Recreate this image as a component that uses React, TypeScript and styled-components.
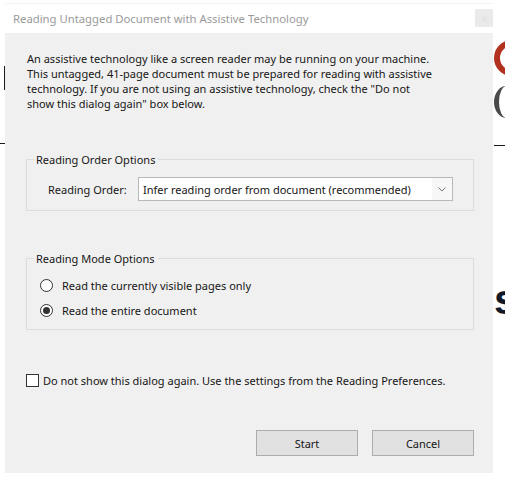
import React from "react";
import styled, { createGlobalStyle } from "styled-components";

const GlobalStyle = createGlobalStyle`
  html, body {
    margin: 0;
    padding: 0;
    background: #ffffff;
  }
  body {
    font-family: "Noto Sans", "Liberation Sans", sans-serif;
    font-size: 11px;
    color: #161616;
  }
`;

const Stage = styled.div`
  position: relative;
  width: 505px;
  height: 485px;
  overflow: hidden;
  background: #ffffff;
`;

// bits of the document behind the dialog
const RedRing = styled.div`
  position: absolute;
  left: 494px;
  top: 40px;
  width: 24px;
  height: 24px;
  border: 6px solid #b3321f;
  border-radius: 50%;
`;

const DarkArc = styled.div`
  position: absolute;
  left: 494px;
  top: 86px;
  width: 20px;
  height: 32px;
  border-left: 5px solid #4a4a4a;
  border-radius: 50%;
`;

const Rule = styled.div<{ $top: number; $left: number; $width: number }>`
  position: absolute;
  top: ${(p) => p.$top}px;
  left: ${(p) => p.$left}px;
  width: ${(p) => p.$width}px;
  height: 1px;
  background: #1a1a1a;
`;

const VRule = styled.div`
  position: absolute;
  left: 4px;
  top: 66px;
  width: 1px;
  height: 24px;
  background: #1a1a1a;
`;

const BigS = styled.span`
  position: absolute;
  left: 494px;
  top: 279px;
  font-family: "Liberation Sans", sans-serif;
  font-weight: 700;
  font-size: 42px;
  line-height: 42px;
  color: #121826;
`;

const Window = styled.div`
  position: relative;
  margin: 3px 0 0 5px;
  width: 488px;
  border-top: 1px solid #f2f2f2;
`;

const TitleBar = styled.div`
  height: 29px;
  display: flex;
  align-items: center;
  justify-content: space-between;
  padding-left: 8px;
  background: #ffffff;
`;

const Title = styled.span`
  font-size: 11.3px;
  color: #9a9a9a;
`;

const CloseButton = styled.div`
  width: 18px;
  height: 18px;
  margin-top: -1px;
  background: #eaeaea;
  display: flex;
  align-items: center;
  justify-content: center;
  color: #dedede;
  font-size: 8px;
`;

const Body = styled.div`
  height: 440px;
  box-sizing: border-box;
  background: #f0f0f0;
  padding: 18px 19px 0 21px;
  display: flex;
  flex-direction: column;
`;

const Intro = styled.p`
  margin: 0 0 0 1px;
  line-height: 15px;
`;

const Group = styled.fieldset<{ $gap: number }>`
  margin: ${(p) => p.$gap}px 0 0 0;
  border: 1px solid #dcdcdc;
  padding: 0;
  min-width: 0;
`;

const Legend = styled.legend`
  margin-left: 7px;
  padding: 0 3px 0 2px;
  line-height: 15px;
`;

const OrderRow = styled.div`
  display: flex;
  align-items: center;
  padding: 10px 0 9px 21px;
`;

const FieldLabel = styled.span`
  width: 90px;
`;

const Select = styled.div`
  display: flex;
  align-items: center;
  width: 315px;
  height: 24px;
  box-sizing: border-box;
  border: 1px solid #b9b9b9;
  background: #ffffff;
`;

const SelectValue = styled.span`
  flex: 1;
  padding-left: 4px;
`;

const SelectArrow = styled.div`
  width: 20px;
  height: 100%;
  display: flex;
  align-items: center;
  justify-content: center;
  background: #f7f7f7;
`;

const OptionList = styled.div`
  display: flex;
  flex-direction: column;
  padding: 7px 0 6px 13px;
`;

const OptionRow = styled.label`
  display: flex;
  align-items: center;
  height: 25px;
  gap: 9px;
`;

const Radio = styled.span<{ $checked?: boolean }>`
  width: 13px;
  height: 13px;
  box-sizing: border-box;
  border: 1px solid #333333;
  border-radius: 50%;
  background: #ffffff;
  display: flex;
  align-items: center;
  justify-content: center;
  &::after {
    content: "";
    width: 7px;
    height: 7px;
    border-radius: 50%;
    background: ${(p) => (p.$checked ? "#333333" : "transparent")};
  }
`;

const CheckRow = styled.label`
  display: flex;
  align-items: center;
  gap: 4px;
  margin-top: 43px;
  line-height: 15px;
`;

const CheckBox = styled.span`
  width: 13px;
  height: 13px;
  box-sizing: border-box;
  border: 1px solid #333333;
  background: #ffffff;
`;

const Buttons = styled.div`
  display: flex;
  justify-content: flex-end;
  gap: 14px;
  margin-top: 42px;
`;

const Button = styled.div`
  width: 102px;
  height: 26px;
  box-sizing: border-box;
  border: 1px solid #adadad;
  background: #e1e1e1;
  display: flex;
  align-items: center;
  justify-content: center;
`;

const Chevron = () => (
  <svg width="8" height="5" viewBox="0 0 8 5">
    <path d="M0.5 0.5 L4 4 L7.5 0.5" fill="none" stroke="#7a7a7a" strokeWidth="1" />
  </svg>
);

export default function App() {
  return (
    <>
      <GlobalStyle />
      <Stage>
        <RedRing />
        <DarkArc />
        <Rule $top={145} $left={494} $width={11} />
        <Rule $top={143} $left={0} $width={5} />
        <VRule />
        <BigS>s</BigS>
        <Window>
          <TitleBar>
            <Title>Reading Untagged Document with Assistive Technology</Title>
            <CloseButton>✕</CloseButton>
          </TitleBar>
          <Body>
            <Intro>
              An assistive technology like a screen reader may be running on your machine.
              <br />
              This untagged, 41-page document must be prepared for reading with assistive
              <br />
              technology. If you are not using an assistive technology, check the "Do not
              <br />
              show this dialog again" box below.
            </Intro>

            <Group $gap={41}>
              <Legend>Reading Order Options</Legend>
              <OrderRow>
                <FieldLabel>Reading Order:</FieldLabel>
                <Select>
                  <SelectValue>Infer reading order from document (recommended)</SelectValue>
                  <SelectArrow>
                    <Chevron />
                  </SelectArrow>
                </Select>
              </OrderRow>
            </Group>

            <Group $gap={40}>
              <Legend>Reading Mode Options</Legend>
              <OptionList>
                <OptionRow>
                  <Radio />
                  Read the currently visible pages only
                </OptionRow>
                <OptionRow>
                  <Radio $checked />
                  Read the entire document
                </OptionRow>
              </OptionList>
            </Group>

            <CheckRow>
              <CheckBox />
              Do not show this dialog again. Use the settings from the Reading Preferences.
            </CheckRow>

            <Buttons>
              <Button>Start</Button>
              <Button>Cancel</Button>
            </Buttons>
          </Body>
        </Window>
      </Stage>
    </>
  );
}
